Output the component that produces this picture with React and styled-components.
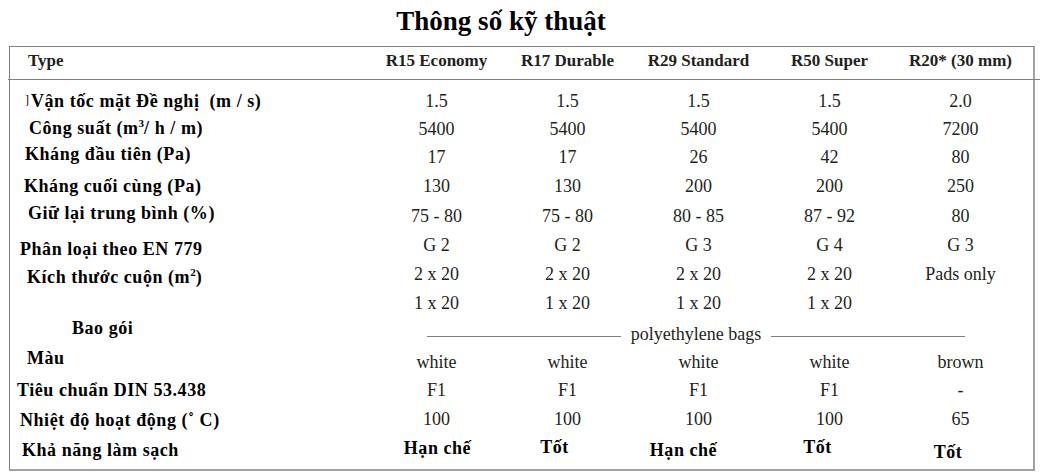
import React from 'react';
import styled, { createGlobalStyle } from 'styled-components';

const GlobalStyle = createGlobalStyle`
  body {
    margin: 0;
    background: #ffffff;
  }
`;

const COLS = '361px repeat(5, 131px)';

// shift an item that sits centred in its cell, by margins (keeps it in flow)
const shiftY = (dy = 0) =>
  dy >= 0 ? `margin-top: ${dy * 2}px;` : `margin-bottom: ${-dy * 2}px;`;
const shiftX = (dx = 0) =>
  dx >= 0 ? `padding-left: ${dx * 2}px;` : `padding-right: ${-dx * 2}px;`;

const Page = styled.div`
  padding: 6px 0 0 9px;
  font-family: 'Liberation Serif', 'Times New Roman', serif;
`;

const Title = styled.h1`
  box-sizing: border-box;
  width: 1026px;
  margin: 0;
  padding-right: 42px;
  font-size: 27px;
  line-height: 31px;
  font-weight: bold;
  text-align: center;
  color: #000;
`;

const SpecBox = styled.div`
  box-sizing: border-box;
  width: 1026px;
  margin-top: 9px;
  padding: 0 7px 7px 0;
  border-top: 1px solid #808080;
  border-left: 1px solid #808080;
  border-right: 2px solid #a3a3a3;
  border-bottom: 2px solid #a3a3a3;
`;

const HeaderRow = styled.div`
  display: grid;
  grid-template-columns: ${COLS};
  align-items: center;
  height: 32px;
  margin: 0 -14px 0 -2px;
  padding-left: 2px;
  border-bottom: 1px solid #808080;
`;

const HeadCell = styled.div`
  font-size: 17px;
  font-weight: bold;
  color: #231f20;
  text-align: ${(p) => (p.$first ? 'left' : 'center')};
  padding-left: ${(p) => (p.$first ? '18px' : '0')};
  ${shiftY(-2)}
`;

const Body = styled.div`
  padding-top: 7px;
`;

const Row = styled.div`
  display: grid;
  grid-template-columns: ${COLS};
  align-items: center;
  height: ${(p) => p.$h}px;
`;

const Label = styled.div`
  font-size: 18px;
  font-weight: bold;
  letter-spacing: 0.55px;
  color: #000;
  white-space: pre;
  padding-left: ${(p) => p.$indent}px;
  ${(p) => shiftY(p.$dy)}
`;

const Bracket = styled.span`
  font-size: 12px;
  font-weight: normal;
  letter-spacing: 0;
  margin-right: 2px;
  vertical-align: 3px;
`;

const Sup = styled.sup`
  font-size: 11px;
  letter-spacing: 0;
  vertical-align: 7px;
  line-height: 0;
`;

const Value = styled.div`
  font-size: 18px;
  color: #231f20;
  text-align: center;
  white-space: pre;
  ${(p) => shiftX(p.$dx)}
  ${(p) => shiftY(p.$dy)}
`;

const Verdict = styled(Value)`
  font-weight: bold;
  letter-spacing: 0.55px;
  color: #000;
`;

const SpanLine = styled.div`
  grid-column: 2 / span 5;
  display: flex;
  align-items: center;
  gap: 10px;
  margin: 0 61px 0 56px;
  font-size: 18px;
  color: #231f20;
  ${shiftY(1)}
`;

const Rule = styled.span`
  flex: 1;
  height: 1px;
  margin-top: 3px;
  background: #808080;
`;

const heads = ['R15 Economy', 'R17 Durable', 'R29 Standard', 'R50 Super', 'R20* (30 mm)'];

const rows = [
  {
    h: 28, indent: 15, dy: 0.5,
    label: <><Bracket>]</Bracket>{'Vận tốc mặt Đề nghị\u00a0 (m / s)'}</>,
    values: ['1.5', '1.5', '1.5', '1.5', '2.0'],
  },
  {
    h: 28, indent: 19, dy: -1,
    label: <>Công suất (m<Sup>3</Sup>/ h / m)</>,
    values: ['5400', '5400', '5400', '5400', '7200'],
  },
  { h: 29, indent: 15, dy: -3.5, label: 'Kháng đầu tiên (Pa)', values: ['17', '17', '26', '42', '80'] },
  { h: 29, indent: 14, dy: 0, label: 'Kháng cuối cùng (Pa)', values: ['130', '130', '200', '200', '250'] },
  { h: 30, indent: 18, dy: -3, label: 'Giữ lại trung bình (%)', values: ['75 - 80', '75 - 80', '80 - 85', '87 - 92', '80'] },
  { h: 29, indent: 10, dy: 3.5, label: 'Phân loại theo EN 779', values: ['G 2', 'G 2', 'G 3', 'G 4', 'G 3'] },
  {
    h: 28, indent: 17, dy: 3,
    label: <>Kích thước cuộn (m<Sup>2</Sup>)</>,
    values: ['2 x 20', '2 x 20', '2 x 20', '2 x 20', 'Pads only'],
  },
  { h: 30, indent: 0, dy: 0, label: '', values: ['1 x 20', '1 x 20', '1 x 20', '1 x 20', ''] },
  { h: 30, indent: 62, dy: -5, label: 'Bao gói', span: 'polyethylene bags' },
  { h: 28, indent: 17, dy: -3.5, label: 'Màu', values: ['white', 'white', 'white', 'white', 'brown'] },
  { h: 29, indent: 7, dy: 0, label: 'Tiêu chuẩn DIN 53.438', values: ['F1', 'F1', 'F1', 'F1', '-'] },
  { h: 28, indent: 10, dy: 1, label: 'Nhiệt độ hoạt động (˚ C)', values: ['100', '100', '100', '100', '65'] },
  {
    h: 29, indent: 12, dy: 2.5, label: 'Khả năng làm sạch',
    verdicts: [
      { text: 'Hạn chế', dx: 1, dy: 0.5 },
      { text: 'Tốt', dx: -13, dy: -0.5 },
      { text: 'Hạn chế', dx: -15, dy: 2 },
      { text: 'Tốt', dx: -12, dy: -0.5 },
      { text: 'Tốt', dx: -12.5, dy: 4.5 },
    ],
  },
];

const App = () => (
  <Page>
    <GlobalStyle />
    <Title>Thông số kỹ thuật</Title>
    <SpecBox>
      <HeaderRow>
        <HeadCell $first>Type</HeadCell>
        {heads.map((h) => (
          <HeadCell key={h}>{h}</HeadCell>
        ))}
      </HeaderRow>
      <Body>
        {rows.map((r, i) => (
          <Row key={i} $h={r.h}>
            <Label $indent={r.indent} $dy={r.dy}>{r.label}</Label>
            {r.values && r.values.map((v, j) => <Value key={j}>{v}</Value>)}
            {r.span && (
              <SpanLine>
                <Rule />
                {r.span}
                <Rule />
              </SpanLine>
            )}
            {r.verdicts &&
              r.verdicts.map((v, j) => (
                <Verdict key={j} $dx={v.dx} $dy={v.dy}>{v.text}</Verdict>
              ))}
          </Row>
        ))}
      </Body>
    </SpecBox>
  </Page>
);

export default App;
